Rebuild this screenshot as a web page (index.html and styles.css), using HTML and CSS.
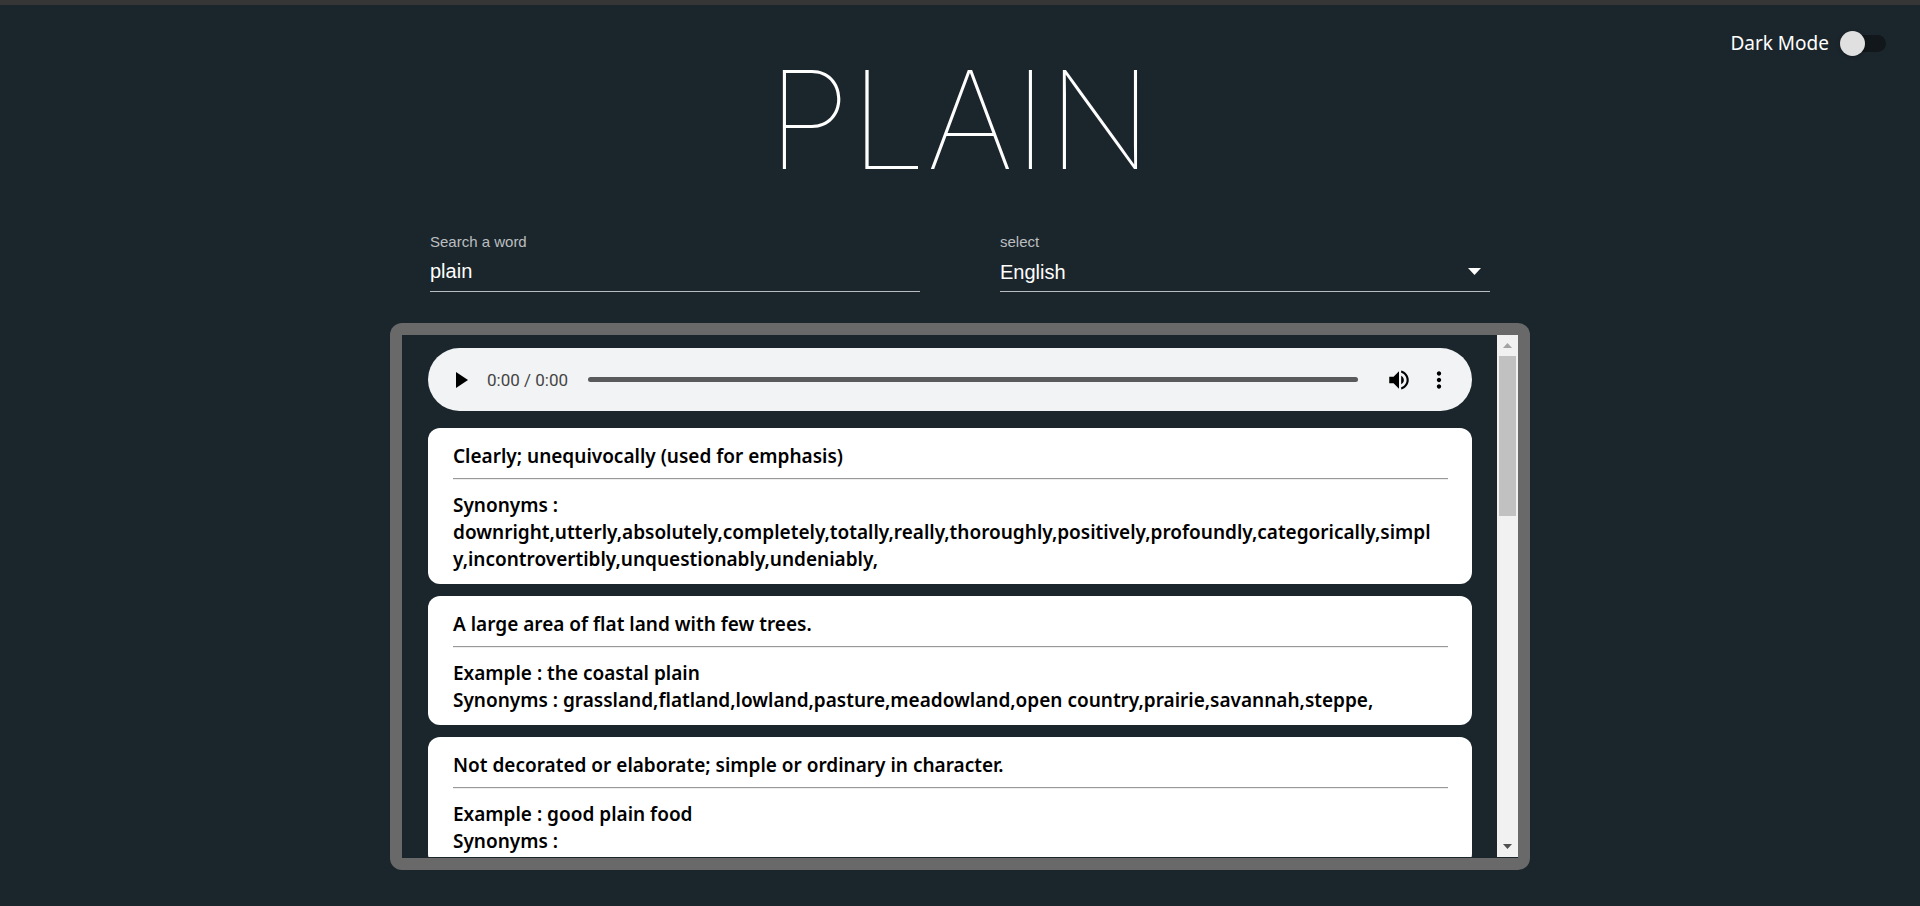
FILE: index.html
```
<!DOCTYPE html>
<html lang="en">
<head>
<meta charset="utf-8">
<title>Dictionary</title>
<link rel="stylesheet" href="styles.css">
</head>
<body>
<div class="page">
  <label class="mode">Dark Mode
    <input class="mode-switch" type="checkbox" role="switch">
  </label>
  <main class="container">
    <h1 class="title">PLAIN</h1>
    <form class="search">
      <div class="field">
        <label class="field-label" for="word">Search a word</label>
        <input class="field-control" id="word" type="text" value="plain">
      </div>
      <div class="field">
        <label class="field-label" for="language">select</label>
        <select class="field-control field-select" id="language">
          <option>English</option>
        </select>
      </div>
    </form>
    <section class="panel">
      <div class="meanings" tabindex="0">
        <div class="player">
          <button class="player-button play" type="button" aria-label="Play">
            <svg width="12" height="16" viewBox="0 0 12 16"><path d="M0 0v16l12-8z"/></svg>
          </button>
          <span class="time">0:00 / 0:00</span>
          <input class="seek" type="range" min="0" max="100" value="0" aria-label="Position">
          <button class="player-button volume" type="button" aria-label="Volume">
            <svg width="26" height="26" viewBox="0 0 24 24"><path d="M3 9v6h4l5 5V4L7 9H3zm13.500 3c0-1.770-1.020-3.290-2.500-4.030v8.050c1.480-.730 2.500-2.250 2.500-4.020zM14 3.230v2.060c2.890.860 5 3.540 5 6.710s-2.110 5.850-5 6.710v2.060c4.010-.910 7-4.490 7-8.770s-2.990-7.860-7-8.770z"/></svg>
          </button>
          <button class="player-button more" type="button" aria-label="More options">
            <svg width="26" height="26" viewBox="0 0 24 24"><path d="M12 8c1.100 0 2-.9 2-2s-.9-2-2-2-2 .9-2 2 .9 2 2 2zm0 2c-1.100 0-2 .9-2 2s.9 2 2 2 2-.9 2-2-.9-2-2-2zm0 6c-1.100 0-2 .9-2 2s.9 2 2 2 2-.9 2-2-.9-2-2-2z"/></svg>
          </button>
        </div>
        <article class="card">
          <b>Clearly; unequivocally (used for emphasis)</b>
          <hr class="rule">
          <b>Synonyms : downright,utterly,absolutely,completely,totally,really,thoroughly,positively,profoundly,categorically,simpl<br>y,incontrovertibly,unquestionably,undeniably,</b>
        </article>
        <article class="card">
          <b>A large area of flat land with few trees.</b>
          <hr class="rule">
          <b>Example : the coastal plain</b>
          <b>Synonyms : grassland,flatland,lowland,pasture,meadowland,open country,prairie,savannah,steppe,</b>
        </article>
        <article class="card">
          <b>Not decorated or elaborate; simple or ordinary in character.</b>
          <hr class="rule">
          <b>Example : good plain food</b>
          <b>Synonyms :</b>
        </article>
      </div>
      <div class="scrollbar">
        <button class="scroll-step" type="button" tabindex="-1" aria-label="Scroll up">
          <svg width="9" height="5"><path fill="#a3a3a3" d="M0 5h9L4.500 0z"/></svg>
        </button>
        <div class="scroll-track"><div class="scroll-thumb"></div></div>
        <button class="scroll-step" type="button" tabindex="-1" aria-label="Scroll down">
          <svg width="9" height="5"><path fill="#505050" d="M0 0h9L4.500 5z"/></svg>
        </button>
      </div>
    </section>
  </main>
</div>
</body>
</html>
```
FILE: styles.css
```
* { box-sizing: border-box; }

body {
  margin: 0;
  background: #1b262c;
  color: #fff;
  font: 19px/27px "Noto Sans", sans-serif;
}

.page {
  min-height: 100vh;
  border-top: 5px solid #363636;
  position: relative;
}

.mode {
  position: absolute;
  top: 25px;
  right: 34px;
  display: flex;
  align-items: center;
  gap: 11px;
}

.mode-switch {
  appearance: none;
  position: relative;
  width: 46px;
  height: 25px;
  margin: 0;
}

.mode-switch::before {
  content: "";
  position: absolute;
  top: 4px;
  left: 3px;
  right: 0;
  height: 17px;
  border-radius: 9px;
  background: #11171a;
}

.mode-switch::after {
  content: "";
  position: absolute;
  top: 0;
  left: 0;
  width: 25px;
  height: 25px;
  border-radius: 50%;
  background: #e0e0e0;
  box-shadow: 0 1px 4px rgba(0, 0, 0, .3);
}

.mode-switch:checked::after { left: 21px; }

.container {
  display: flex;
  flex-direction: column;
  max-width: 1140px;
  margin: 0 auto;
}

.title {
  margin: 35px 0 32px;
  text-align: center;
  font: 100 136px/160px Inter, sans-serif;
}

.search {
  display: grid;
  grid-template-columns: 1fr 1fr;
  gap: 80px;
  padding: 0 40px;
}

.field {
  display: flex;
  flex-direction: column;
  font-family: "Liberation Sans", sans-serif;
}

.field-label {
  font-size: 15px;
  line-height: 20px;
  color: #bbbec0;
}

.field-control {
  appearance: none;
  width: 100%;
  height: 40px;
  padding: 0;
  border: 0;
  border-bottom: 1px solid #bbbec0;
  border-radius: 0;
  background: transparent;
  color: #fff;
  font: 20px "Liberation Sans", sans-serif;
  outline: 0;
}

.field-select {
  background: url("data:image/svg+xml,%3Csvg xmlns='http://www.w3.org/2000/svg' width='13' height='7'%3E%3Cpath fill='white' d='M0 0h13L6.500 7z'/%3E%3C/svg%3E") no-repeat right 9px center;
}

.panel {
  display: flex;
  height: calc(100vh - 359px);
  margin-top: 31px;
  padding: 12px;
  border-radius: 12px;
  background: #696969;
}

.meanings {
  flex: 1;
  min-width: 0;
  padding: 13px 25px 13px 26px;
  overflow-y: auto;
  scrollbar-width: none;
  background: #1b262c;
  border-bottom: 1px solid #1b262c;
}

.scrollbar {
  display: flex;
  flex-direction: column;
  width: 21px;
  background: #f1f1f1;
  border-bottom: 1px solid #1b262c;
}

.scroll-step {
  display: grid;
  place-items: center;
  height: 21px;
  padding: 0;
  border: 0;
  background: none;
}

.scroll-track {
  flex: 1;
  padding: 0 2px;
}

.scroll-thumb {
  height: 33.333%;
  background: #c1c1c1;
}

.player {
  display: flex;
  align-items: center;
  height: 63px;
  margin-bottom: 17px;
  padding: 0 20px 0 28px;
  border-radius: 32px;
  background: #f1f3f4;
  color: #444;
}

.player-button {
  display: grid;
  place-items: center;
  padding: 0;
  border: 0;
  background: none;
}

.time {
  margin: 0 20px 0 19px;
  font: 17px/24px Roboto, sans-serif;
}

.seek {
  appearance: none;
  flex: 1;
  min-width: 0;
  height: 5px;
  margin: 0 28px 0 0;
  border-radius: 3px;
  background: #5a5a5c;
}

.seek::-webkit-slider-thumb {
  appearance: none;
  width: 0;
  height: 0;
}

.volume { margin-right: 14px; }

.card {
  margin-bottom: 12px;
  padding: 15px 24px 11px 25px;
  border-radius: 12px;
  background: #fff;
  color: #000;
}

.card b {
  display: block;
  font-weight: 600;
  overflow-wrap: break-word;
}

.rule {
  height: 2px;
  margin: 8px 0 12px;
  border: 0;
  border-top: 1px solid #999;
  border-bottom: 1px solid #eee;
}
```
